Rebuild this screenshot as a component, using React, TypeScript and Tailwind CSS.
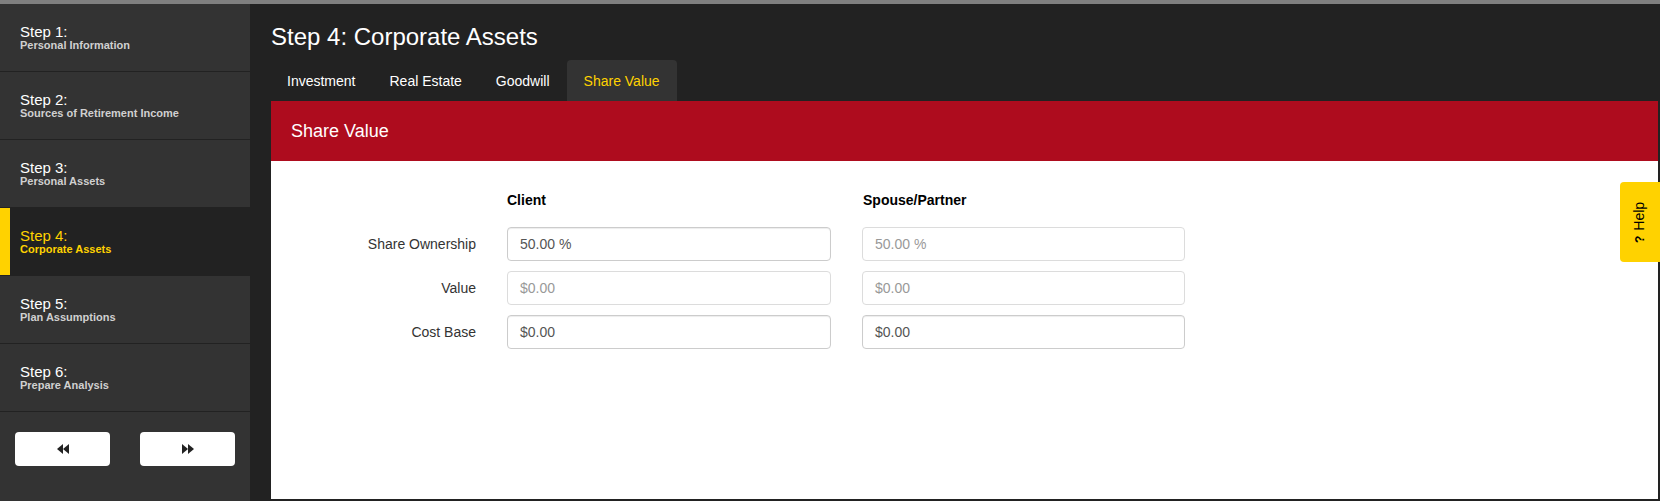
import React from "react";

const steps = [
  { t: "Step 1:", s: "Personal Information" },
  { t: "Step 2:", s: "Sources of Retirement Income" },
  { t: "Step 3:", s: "Personal Assets" },
  { t: "Step 4:", s: "Corporate Assets", active: true },
  { t: "Step 5:", s: "Plan Assumptions" },
  { t: "Step 6:", s: "Prepare Analysis" },
];

const tabs = ["Investment", "Real Estate", "Goodwill", "Share Value"];

function Field({ value, disabled, strong }: { value: string; disabled?: boolean; strong?: boolean }) {
  return (
    <div
      className={
        "h-[34px] rounded-[4px] border px-[12px] flex items-center text-[14px] " +
        (disabled
          ? "border-[#dcdcdc] text-[#999999] bg-white"
          : "border-[#cccccc] text-[#555555] bg-white shadow-[inset_0_1px_1px_rgba(0,0,0,0.075)]") +
        (strong ? " border-[#c4c4c4]" : "")
      }
    >
      {value}
    </div>
  );
}

function Label({ children }: { children: React.ReactNode }) {
  return <div className="h-[34px] flex items-center justify-end text-[14px] text-[#333333]">{children}</div>;
}

export default function App() {
  return (
    <div
      className="w-[1660px] h-[501px] bg-[#222222] flex flex-col overflow-hidden relative"
      style={{ fontFamily: '"Liberation Sans", Arial, sans-serif' }}
    >
      <div className="h-[4px] bg-[#808080] shrink-0" />
      <div className="flex flex-1 min-h-0">
        {/* Sidebar */}
        <div className="w-[250px] bg-[#333333] flex flex-col shrink-0">
          {steps.map((st) => (
            <div
              key={st.t}
              className={
                "h-[68px] border-b border-[#222222] flex relative " + (st.active ? "bg-[#222222]" : "bg-[#333333]")
              }
            >
              {st.active && <div className="w-[10px] bg-[#ffd200] h-[67px]" />}
              <div className={"flex flex-col justify-center h-[67px] " + (st.active ? "pl-[10px]" : "pl-[20px]")}>
                <div className={"text-[15px] leading-[15px] " + (st.active ? "text-[#ffd200]" : "text-white")}>{st.t}</div>
                <div
                  className={
                    "text-[11px] leading-[12px] font-bold " + (st.active ? "text-[#ffd200]" : "text-[#d0d0d0]")
                  }
                >
                  {st.s}
                </div>
              </div>
            </div>
          ))}
          <div className="flex gap-[30px] pl-[15px] pt-[20px]">
            <button className="w-[95px] h-[34px] bg-white rounded-[4px] flex items-center justify-center">
              <svg width="12" height="10" viewBox="0 0 12 10">
                <polygon points="6,0 0,5 6,10" fill="#222" />
                <polygon points="12,0 6,5 12,10" fill="#222" />
              </svg>
            </button>
            <button className="w-[95px] h-[34px] bg-white rounded-[4px] flex items-center justify-center">
              <svg width="12" height="10" viewBox="0 0 12 10">
                <polygon points="0,0 6,5 0,10" fill="#222" />
                <polygon points="6,0 12,5 6,10" fill="#222" />
              </svg>
            </button>
          </div>
        </div>

        {/* Main */}
        <div className="flex-1 flex flex-col pl-[21px] pr-[2px] pt-[19px] pb-[2px] min-w-0">
          <div className="text-[24px] leading-[28px] text-white h-[28px]">Step 4: Corporate Assets</div>
          <div className="flex mt-[9px] h-[41px] -ml-[1px]">
            {tabs.map((t) => (
              <div
                key={t}
                className={
                  "px-[17px] h-[41px] flex items-center text-[14px] leading-[20px] rounded-t-[4px] " +
                  (t === "Share Value" ? "bg-[#333333] text-[#ffd200]" : "text-white")
                }
              >
                {t}
              </div>
            ))}
          </div>
          <div className="flex-1 flex flex-col min-h-0">
            <div className="h-[60px] bg-[#ae0c1e] flex items-center pl-[20px] text-white text-[18px]">Share Value</div>
            <div className="flex-1 bg-white pt-[29px]">
              <div className="grid grid-cols-[205px_324px_323px] gap-x-[31px]">
                <div />
                <div className="text-[14px] leading-[20px] font-bold text-black">Client</div>
                <div className="text-[14px] leading-[20px] font-bold text-black pl-[1px]">Spouse/Partner</div>
              </div>
              <div className="grid grid-cols-[205px_324px_323px] gap-x-[31px] gap-y-[10px] mt-[17px]">
                <Label>Share Ownership</Label>
                <Field value="50.00 %" strong />
                <Field value="50.00 %" disabled />
                <Label>Value</Label>
                <Field value="$0.00" disabled />
                <Field value="$0.00" disabled />
                <Label>Cost Base</Label>
                <Field value="$0.00" strong />
                <Field value="$0.00" strong />
              </div>
            </div>
          </div>
        </div>
      </div>

      {/* Help tab */}
      <div className="absolute right-0 top-[182px] w-[40px] h-[80px] bg-[#ffd200] rounded-l-[4px] flex items-center justify-center">
        <div className="-rotate-90 whitespace-nowrap text-[14px] text-black flex items-center gap-[5px]">
          <span className="font-bold text-[12px]">?</span>
          <span>Help</span>
        </div>
      </div>
    </div>
  );
}
